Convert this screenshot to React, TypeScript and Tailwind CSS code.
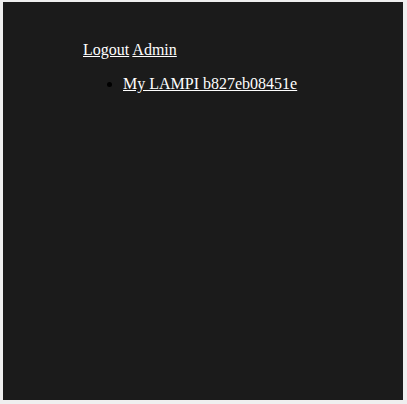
export default function App() {
  return (
    <div className="w-[407px] h-[404px] bg-[#efefef] pt-[2px] pl-[3px]" style={{ fontFamily: '"Liberation Serif", serif' }}>
      <div className="w-[400px] h-[398px] bg-[#1b1b1b] pl-[80px] pt-[39px] text-white text-[16px] leading-[18px]">
        <div>
          <a href="#" className="underline">Logout</a> <a href="#" className="underline">Admin</a>
        </div>
        <ul className="list-disc pl-10 my-4 marker:text-black">
          <li>
            <a href="#" className="underline">My LAMPI b827eb08451e</a>
          </li>
        </ul>
      </div>
    </div>
  );
}
